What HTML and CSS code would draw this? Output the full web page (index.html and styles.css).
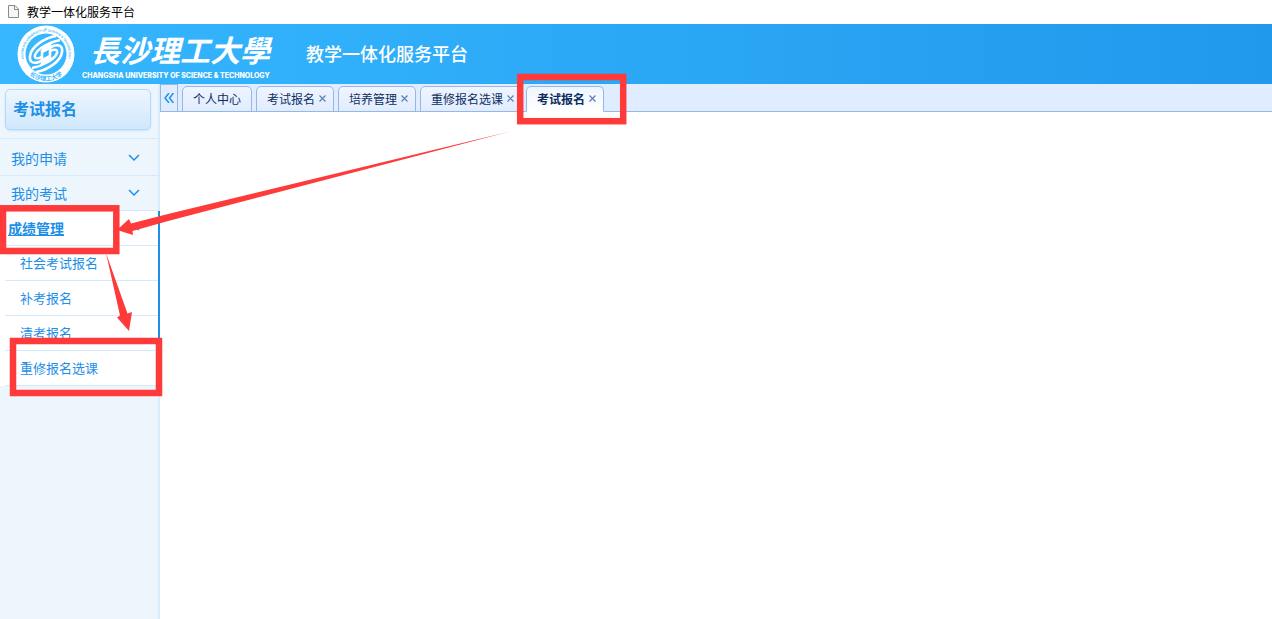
FILE: index.html
```html
<!DOCTYPE html>
<html lang="zh-CN">
<head>
  <meta charset="UTF-8">
  <meta name="viewport" content="width=device-width, initial-scale=1.0">
  <title>教学一体化服务平台</title>
  <link rel="stylesheet" href="styles.css">
</head>
<body>
  <div class="window-title">
    <svg class="page-icon" width="11" height="13" viewBox="0 0 11 13">
      <path d="M.5 .5H7L10.500 4V12.500H.5Z" fill="#f6f6f6" stroke="#8a8a8a"/>
      <path d="M6.500 .5V4.500H10.500" fill="none" stroke="#8a8a8a"/>
    </svg>
    <span>教学一体化服务平台</span>
  </div>

  <header class="header">
    <svg class="seal" width="58" height="58" viewBox="0 0 58 58">
      <defs>
        <path id="sealTop" d="M10 41.500A22.700 22.700 0 1 1 48 41.500"/>
        <path id="sealBottom" d="M5 41A26.800 26.800 0 0 0 53 41"/>
      </defs>
      <circle cx="29" cy="29" r="28.500" fill="#fff"/>
      <circle cx="29" cy="29" r="20.500" fill="#36b7ff"/>
      <text class="seal-en"><textPath href="#sealTop" startOffset="50%">CHANGSHA UNIVERSITY OF SCIENCE &amp; TECHNOLOGY</textPath></text>
      <text class="seal-cn"><textPath href="#sealBottom" startOffset="50%">长沙理工大学</textPath></text>
      <g fill="none" stroke="#fff" stroke-width="2.600">
        <path d="M39 11C27 13 14 22 13 31C12 37 16 39 22 37L33 31"/>
        <path d="M43 15C32 17 20 24 18 30C17 34 21 34 25 32"/>
        <path d="M19 47C31 45 44 36 45 27C46 21 42 19 36 21L25 27"/>
        <path d="M15 43C26 41 38 34 40 28C41 24 37 24 33 26"/>
        <path d="M25 25V38L33 33V20L25 25"/>
      </g>
    </svg>
    <div class="school">
      <div class="school-cn">長沙理工大學</div>
      <div class="school-en">CHANGSHA UNIVERSITY OF SCIENCE &amp; TECHNOLOGY</div>
    </div>
    <h1 class="platform">教学一体化服务平台</h1>
  </header>

  <div class="main">
    <aside class="sidebar">
      <h2 class="side-title">考试报名</h2>
      <nav class="menu">
        <button class="menu-item" type="button">
          <span>我的申请</span>
          <svg width="12" height="8" viewBox="0 0 12 8"><path d="M1 1L6 6L11 1"/></svg>
        </button>
        <button class="menu-item" type="button">
          <span>我的考试</span>
          <svg width="12" height="8" viewBox="0 0 12 8"><path d="M1 1L6 6L11 1"/></svg>
        </button>
        <div class="menu-open">
          <button class="menu-item active" type="button">
            <span>成绩管理</span>
            <svg width="12" height="8" viewBox="0 0 12 8"><path d="M1 6L6 1L11 6"/></svg>
          </button>
          <div class="submenu">
            <a href="#">社会考试报名</a>
            <a href="#">补考报名</a>
            <a href="#">清考报名</a>
            <a href="#">重修报名选课</a>
          </div>
        </div>
      </nav>
    </aside>

    <section class="content">
      <div class="tabs">
        <button class="collapse" type="button" aria-label="收起菜单">
          <svg width="10" height="10" viewBox="0 0 10 10"><path d="M5 0L1 5L5 10M9.500 0L5.500 5L9.500 10"/></svg>
        </button>
        <div class="tab"><a href="#">个人中心</a></div>
        <div class="tab closable"><a href="#">考试报名</a><button class="close" type="button" aria-label="关闭"><svg width="7" height="7" viewBox="0 0 7 7"><path d="M.5 .5L6.500 6.500M6.500 .5L.5 6.500"/></svg></button></div>
        <div class="tab closable"><a href="#">培养管理</a><button class="close" type="button" aria-label="关闭"><svg width="7" height="7" viewBox="0 0 7 7"><path d="M.5 .5L6.500 6.500M6.500 .5L.5 6.500"/></svg></button></div>
        <div class="tab closable"><a href="#">重修报名选课</a><button class="close" type="button" aria-label="关闭"><svg width="7" height="7" viewBox="0 0 7 7"><path d="M.5 .5L6.500 6.500M6.500 .5L.5 6.500"/></svg></button></div>
        <div class="tab closable selected"><a href="#">考试报名</a><button class="close" type="button" aria-label="关闭"><svg width="7" height="7" viewBox="0 0 7 7"><path d="M.5 .5L6.500 6.500M6.500 .5L.5 6.500"/></svg></button></div>
      </div>
    </section>
  </div>

  <!-- step marks: tab, menu group, menu entry -->
  <svg class="marks" width="640" height="400" viewBox="0 0 640 400">
    <g fill="none" stroke="#fe3a3a" stroke-width="6.500">
      <rect x="520.200" y="77" width="103" height="44.200"/>
      <rect x="3" y="208.300" width="113.300" height="42.700"/>
      <rect x="13" y="341" width="146" height="52"/>
    </g>
    <g fill="#fe3a3a">
      <path d="M518 129.500L170 220.500L132.500 231L133 235L117 230L129 219L131 223.500L170 213.500Z"/>
      <path d="M106 253L127.500 313.500L132 312L129 331L117 317.500L120 315.500Z"/>
    </g>
  </svg>
</body>
</html>
```

FILE: styles.css
```css
* {
  margin: 0;
  padding: 0;
  box-sizing: border-box;
}

body {
  position: relative;
  min-height: 100vh;
  display: flex;
  flex-direction: column;
  font-family: "Liberation Sans", "Noto Sans CJK SC", sans-serif;
  font-size: 12px;
  background: #fff;
}

button {
  font: inherit;
  color: inherit;
  background: none;
  border: none;
  cursor: pointer;
}

a {
  color: inherit;
  text-decoration: none;
}

.window-title {
  height: 24px;
  padding: 0 8px 2px;
  display: flex;
  align-items: center;
  gap: 8px;
  color: #000;
}

/* header */
.header {
  height: 60px;
  padding-left: 17px;
  display: flex;
  align-items: center;
  color: #fff;
  background: linear-gradient(90deg, #36b7ff 0%, #2099ec 100%);
}

.seal {
  flex-shrink: 0;
  overflow: visible;
}

.seal-en,
.seal-cn {
  fill: #36b7ff;
  text-anchor: middle;
  font-weight: bold;
}

.seal-en {
  font-size: 3px;
}

.seal-cn {
  font-size: 6px;
}

.school {
  flex-shrink: 0;
  margin-left: 7px;
  width: 194px;
}

.school-cn {
  padding-left: 8px;
  font-family: "Noto Sans CJK TC", sans-serif;
  font-size: 30px;
  font-style: italic;
  font-weight: bold;
  line-height: 44px;
  white-space: nowrap;
}

.school-en {
  font-family: Inter, "Liberation Sans", sans-serif;
  font-size: 7px;
  font-weight: 800;
  line-height: 10px;
  white-space: nowrap;
}

.platform {
  margin-left: 30px;
  padding-top: 2px;
  font-size: 18px;
  font-weight: 500;
  line-height: 24px;
  white-space: nowrap;
}

.main {
  flex: 1;
  display: flex;
}

/* sidebar */
.sidebar {
  width: 160px;
  flex-shrink: 0;
  padding-top: 5px;
  color: #1e8fe6;
  background: linear-gradient(#d9ecfd, #d9ecfd) right / 2px 100% no-repeat #eef6fd;
}

.side-title {
  height: 41px;
  margin: 0 9px 8px 5px;
  padding: 0 7px;
  font-size: 16px;
  line-height: 39px;
  border: 1px solid #b3dafb;
  border-radius: 5px;
  background: linear-gradient(#edf6fe, #d0e8fd);
  box-shadow: 0 1px 2px #c5e1f8;
}

.menu {
  padding-top: 2px;
  border-top: 1px solid #d5ebfd;
}

.menu-item {
  width: 100%;
  height: 35px;
  padding: 0 20px 0 11px;
  display: flex;
  align-items: center;
  justify-content: space-between;
  font-size: 14px;
  border-bottom: 1px solid #d5ebfd;
}

.menu-item svg {
  fill: none;
  stroke: #1e8fe6;
  stroke-width: 1.5;
}

.menu-open {
  background: #fff;
  border-right: 2px solid #1e8fe6;
}

.menu-item.active {
  padding: 0 18px 0 8px;
  font-weight: bold;
  text-decoration: underline;
}

.submenu a {
  display: block;
  height: 35px;
  margin-left: 5px;
  padding-left: 15px;
  font-size: 13px;
  line-height: 36px;
  border-bottom: 1px solid #d5ebfd;
}

/* tabs */
.content {
  flex: 1;
  min-width: 0;
}

.tabs {
  height: 28px;
  display: flex;
  align-items: flex-end;
  gap: 4px;
  background: linear-gradient(#95b8e7, #95b8e7) bottom / 100% 1px no-repeat #e0ecff;
}

.collapse {
  width: 18px;
  height: 28px;
  display: flex;
  align-items: center;
  justify-content: center;
  border: 1px solid #95b8e7;
}

.collapse svg {
  fill: none;
  stroke: #1e8fe6;
  stroke-width: 1.5;
}

.tab {
  height: 26px;
  padding: 0 10px 1px;
  display: flex;
  align-items: center;
  color: #0e2d5f;
  white-space: nowrap;
  border: 1px solid #95b8e7;
  border-radius: 5px 5px 0 0;
  background: linear-gradient(#eff5ff, #e0ecff);
}

.tab.closable {
  padding-right: 3px;
}

.tab.selected {
  font-weight: bold;
  border-bottom-color: #fff;
  background: linear-gradient(#eff5ff, #fff);
}

.close {
  width: 15px;
  height: 18px;
  display: flex;
  align-items: center;
  justify-content: center;
}

.close svg {
  fill: none;
  stroke: #5c7fb5;
  stroke-width: 1.2;
}

.marks {
  position: absolute;
  top: 0;
  left: 0;
  pointer-events: none;
}
```
